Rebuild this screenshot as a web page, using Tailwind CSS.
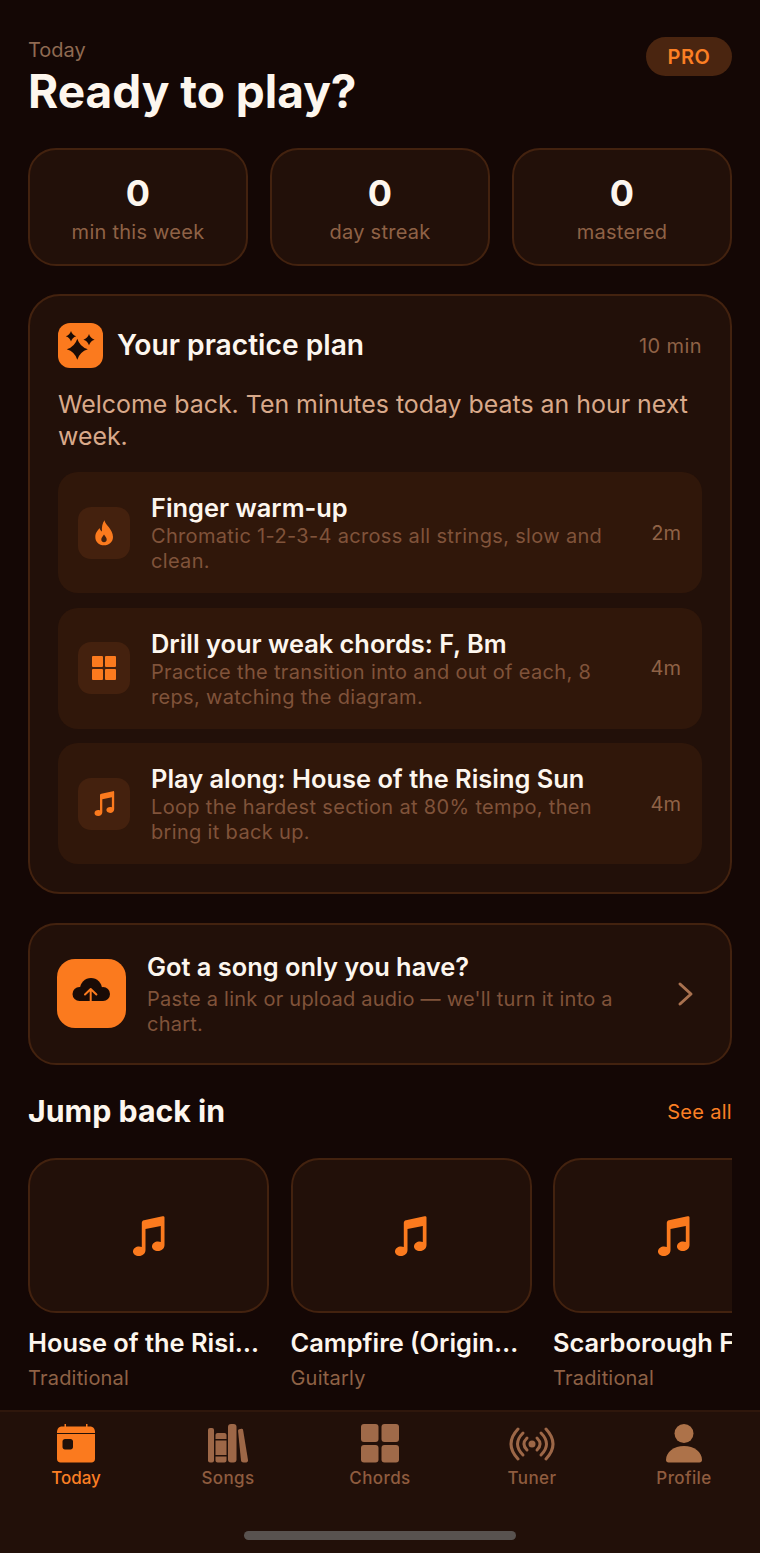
<!DOCTYPE html>
<html lang="en">
<head>
  <meta charset="UTF-8" />
  <meta name="viewport" content="width=device-width, initial-scale=1.0"/>
  <title>Today</title>
  <script src="https://cdn.jsdelivr.net/npm/@tailwindcss/browser@4"></script>
</head>
<body class="bg-[#140705] font-['Inter',sans-serif]">
<div class="w-[760px] h-[1553px] overflow-hidden flex flex-col">

  <main class="flex-1 min-h-0 px-[28px] overflow-hidden">
    <!-- header -->
    <div class="flex justify-between h-[148px] pt-[37px]">
      <div>
        <p class="text-[20px] leading-[26px] text-[#8f6a52]">Today</p>
        <h1 class="text-[46px] leading-[56px] font-bold text-[#fdf6ee]">Ready to play?</h1>
      </div>
      <span class="h-[39px] w-[86px] flex items-center justify-center rounded-full bg-[#4a2510] text-[20px] font-semibold tracking-[0.5px] text-[#fb7f24]">PRO</span>
    </div>

    <!-- stats -->
    <div class="grid grid-cols-3 gap-[22px]">
      <div class="h-[118px] rounded-[28px] border-2 border-[#43220f] bg-[#221009] flex flex-col items-center pt-[23px]">
        <p class="text-[36px] leading-[40px] font-bold text-[#fdf6ee]">0</p>
        <p class="mt-[6px] text-[20px] leading-[26px] tracking-[0.25px] text-[#8f6246]">min this week</p>
      </div>
      <div class="h-[118px] rounded-[28px] border-2 border-[#43220f] bg-[#221009] flex flex-col items-center pt-[23px]">
        <p class="text-[36px] leading-[40px] font-bold text-[#fdf6ee]">0</p>
        <p class="mt-[6px] text-[20px] leading-[26px] tracking-[0.25px] text-[#8f6246]">day streak</p>
      </div>
      <div class="h-[118px] rounded-[28px] border-2 border-[#43220f] bg-[#221009] flex flex-col items-center pt-[23px]">
        <p class="text-[36px] leading-[40px] font-bold text-[#fdf6ee]">0</p>
        <p class="mt-[6px] text-[20px] leading-[26px] tracking-[0.25px] text-[#8f6246]">mastered</p>
      </div>
    </div>

    <!-- practice plan -->
    <section class="mt-[28px] h-[600px] rounded-[32px] border-2 border-[#43220f] bg-[#221009] px-[28px] pt-[26.500px]">
      <div class="flex items-center h-[46px]">
        <div class="w-[45px] h-[45px] rounded-[12px] bg-[#fb7a1e]">
          <svg width="45" height="45" viewBox="0 0 45 45" fill="#1a0b06"><path d="M19.300 15.800Q21.800 23.800 29.800 26.300Q21.800 28.800 19.300 36.800Q16.800 28.800 8.800 26.300Q16.800 23.800 19.300 15.800z"/><path d="M13 8.100Q14.200 12.100 18.200 13.300Q14.200 14.500 13 18.500Q11.800 14.500 7.800 13.300Q11.800 12.100 13 8.100z"/><path d="M31 11.100Q32.300 15.400 36.600 16.700Q32.300 18 31 22.300Q29.700 18 25.400 16.700Q29.700 15.400 31 11.100z"/></svg>
        </div>
        <h2 class="ml-[14px] text-[28.200px] font-semibold text-[#fdf6ee]">Your practice plan</h2>
        <span class="ml-auto text-[20px] tracking-[0.4px] text-[#8f6246]">10 min</span>
      </div>
      <p class="mt-[19.500px] text-[24.900px] leading-[32px] text-[#d9a98a]">Welcome back. Ten minutes today beats an hour next week.</p>

      <div class="mt-[20px] flex flex-col gap-[14.500px]">
        <div class="h-[121px] rounded-[20px] bg-[#30170a] flex items-center pl-[20px] pr-[21px]">
          <div class="w-[52px] h-[52px] shrink-0 rounded-[13px] bg-[#44210e]">
            <svg width="52" height="52" viewBox="0 0 52 52" fill="#fb7a1e"><path fill-rule="evenodd" d="M26.500 13.300C27 18 35 22 35 30C35 35 31 38.300 26 38.300C21 38.300 17.300 35 17.300 30C17.300 25.500 20 23.500 21.500 21C22 23 23 24 24 24.500C23.500 20 24.500 16 26.500 13.300zM26 27.500C24.500 29.500 23.300 31 23.300 32.500C23.300 34.200 24.500 35.300 26 35.300C27.500 35.300 28.700 34.200 28.700 32.500C28.700 31 27.500 29.500 26 27.500z"/></svg>
          </div>
          <div class="ml-[21px] flex-1 min-w-0 pt-[2px]">
            <p class="text-[25.400px] leading-[30px] font-semibold text-[#fdf6ee]">Finger warm-up</p>
            <p class="mt-[1px] text-[20px] leading-[25px] tracking-[0.33px] text-[#80533a]">Chromatic 1-2-3-4 across all strings, slow and clean.</p>
          </div>
          <span class="ml-[32px] shrink-0 text-[20px] text-[#8f6246]">2m</span>
        </div>

        <div class="h-[121px] rounded-[20px] bg-[#30170a] flex items-center pl-[20px] pr-[21px]">
          <div class="w-[52px] h-[52px] shrink-0 rounded-[13px] bg-[#44210e] flex items-center justify-center">
            <svg width="26" height="26" viewBox="0 0 26 26" fill="#fb7a1e"><rect x="1" y="1" width="11" height="11" rx="1"/><rect x="14" y="1" width="11" height="11" rx="1"/><rect x="1" y="14" width="11" height="11" rx="1"/><rect x="14" y="14" width="11" height="11" rx="1"/></svg>
          </div>
          <div class="ml-[21px] flex-1 min-w-0 pt-[2px]">
            <p class="text-[25.400px] leading-[30px] font-semibold text-[#fdf6ee]">Drill your weak chords: F, Bm</p>
            <p class="mt-[1px] text-[20px] leading-[25px] tracking-[0.33px] text-[#80533a]">Practice the transition into and out of each, 8 reps, watching the diagram.</p>
          </div>
          <span class="ml-[32px] shrink-0 text-[20px] text-[#8f6246]">4m</span>
        </div>

        <div class="h-[121px] rounded-[20px] bg-[#30170a] flex items-center pl-[20px] pr-[21px]">
          <div class="w-[52px] h-[52px] shrink-0 rounded-[13px] bg-[#44210e] flex items-center justify-center">
            <svg width="21" height="25" viewBox="0 0 32 40" fill="#fb7a1e"><path d="M31.500 1.500V29C31.500 32.500 28.500 35 25 35C21.500 35 19 33 19 30.500C19 27.500 22 25.500 25 25.500C26 25.500 27 25.700 27.800 26V10L12.500 13V34C12.500 37.500 9.500 40 6 40C2.500 40 0 38 0 35.500C0 32.500 3 30.500 6 30.500C7 30.500 8 30.700 8.800 31V7C8.800 5.500 9.500 4.500 11 4.200L29.500 .2C30.700 0 31.500 .5 31.500 1.500z"/></svg>
          </div>
          <div class="ml-[21px] flex-1 min-w-0 pt-[2px]">
            <p class="text-[25.400px] leading-[30px] font-semibold text-[#fdf6ee]">Play along: House of the Rising Sun</p>
            <p class="mt-[1px] text-[20px] leading-[25px] tracking-[0.33px] text-[#80533a]">Loop the hardest section at 80% tempo, then bring it back up.</p>
          </div>
          <span class="ml-[32px] shrink-0 text-[20px] text-[#8f6246]">4m</span>
        </div>
      </div>
    </section>

    <!-- upload -->
    <section class="mt-[29px] h-[142px] rounded-[28px] border-2 border-[#43220f] bg-[#221009] flex items-center pl-[27px] pr-[35px]">
      <div class="w-[69px] h-[69px] mb-[2px] shrink-0 rounded-[18px] bg-[#fb7a1e]">
        <svg width="69" height="69" viewBox="0 0 69 69"><g fill="#1a0b06"><circle cx="34" cy="30" r="11"/><circle cx="22.500" cy="35" r="7"/><circle cx="46" cy="35" r="7"/><rect x="22" y="32" width="24" height="10"/></g><path fill="none" stroke="#fb7a1e" stroke-width="2" stroke-linecap="round" stroke-linejoin="round" d="M33.700 49V30M28 35.500L33.700 30L39.400 35.500"/></svg>
      </div>
      <div class="ml-[21px] flex-1 min-w-0 mb-[1px]">
        <p class="text-[25.400px] leading-[32px] font-semibold text-[#fdf6ee]">Got a song only you have?</p>
        <p class="mt-[4px] text-[20px] leading-[25px] tracking-[0.25px] text-[#80533a]">Paste a link or upload audio — we'll turn it into a chart.</p>
      </div>
      <svg class="ml-[50px] shrink-0" width="18" height="26" viewBox="0 0 18 26" fill="none" stroke="#a9714f" stroke-width="3" stroke-linecap="round" stroke-linejoin="round"><path d="M3 3l11 10L3 23"/></svg>
    </section>

    <!-- jump back in -->
    <div class="mt-[27px] flex items-center justify-between h-[40px]">
      <h2 class="text-[30.300px] font-bold text-[#fdf6ee]">Jump back in</h2>
      <a class="text-[20px] tracking-[0.3px] text-[#fb7f24]">See all</a>
    </div>
    <div class="mt-[26px] flex gap-[21.500px] overflow-hidden">
      <div class="w-[241px] shrink-0">
        <div class="h-[155px] rounded-[28px] border-2 border-[#43220f] bg-[#221009] flex items-center justify-center">
          <svg width="32" height="40" viewBox="0 0 32 40" fill="#fb7a1e"><path d="M31.500 1.500V29C31.500 32.500 28.500 35 25 35C21.500 35 19 33 19 30.500C19 27.500 22 25.500 25 25.500C26 25.500 27 25.700 27.800 26V10L12.500 13V34C12.500 37.500 9.500 40 6 40C2.500 40 0 38 0 35.500C0 32.500 3 30.500 6 30.500C7 30.500 8 30.700 8.800 31V7C8.800 5.500 9.500 4.500 11 4.200L29.500 .2C30.700 0 31.500 .5 31.500 1.500z"/></svg>
        </div>
        <p class="mt-[13px] text-[25.400px] leading-[34px] font-semibold text-[#fdf6ee] truncate">House of the Rising Sun</p>
        <p class="mt-[5px] text-[20px] leading-[26px] tracking-[0.2px] text-[#8f6246]">Traditional</p>
      </div>
      <div class="w-[241px] shrink-0">
        <div class="h-[155px] rounded-[28px] border-2 border-[#43220f] bg-[#221009] flex items-center justify-center">
          <svg width="32" height="40" viewBox="0 0 32 40" fill="#fb7a1e"><path d="M31.500 1.500V29C31.500 32.500 28.500 35 25 35C21.500 35 19 33 19 30.500C19 27.500 22 25.500 25 25.500C26 25.500 27 25.700 27.800 26V10L12.500 13V34C12.500 37.500 9.500 40 6 40C2.500 40 0 38 0 35.500C0 32.500 3 30.500 6 30.500C7 30.500 8 30.700 8.800 31V7C8.800 5.500 9.500 4.500 11 4.200L29.500 .2C30.700 0 31.500 .5 31.500 1.500z"/></svg>
        </div>
        <p class="mt-[13px] text-[25.400px] leading-[34px] font-semibold text-[#fdf6ee] truncate">Campfire (Original Mix)</p>
        <p class="mt-[5px] text-[20px] leading-[26px] tracking-[0.2px] text-[#8f6246]">Guitarly</p>
      </div>
      <div class="w-[241px] shrink-0">
        <div class="h-[155px] rounded-[28px] border-2 border-[#43220f] bg-[#221009] flex items-center justify-center">
          <svg width="32" height="40" viewBox="0 0 32 40" fill="#fb7a1e"><path d="M31.500 1.500V29C31.500 32.500 28.500 35 25 35C21.500 35 19 33 19 30.500C19 27.500 22 25.500 25 25.500C26 25.500 27 25.700 27.800 26V10L12.500 13V34C12.500 37.500 9.500 40 6 40C2.500 40 0 38 0 35.500C0 32.500 3 30.500 6 30.500C7 30.500 8 30.700 8.800 31V7C8.800 5.500 9.500 4.500 11 4.200L29.500 .2C30.700 0 31.500 .5 31.500 1.500z"/></svg>
        </div>
        <p class="mt-[13px] text-[25.400px] leading-[34px] font-semibold text-[#fdf6ee] whitespace-nowrap">Scarborough Fair</p>
        <p class="mt-[5px] text-[20px] leading-[26px] tracking-[0.2px] text-[#8f6246]">Traditional</p>
      </div>
    </div>
  </main>

  <!-- tab bar -->
  <nav class="h-[143px] shrink-0 bg-[#221009] border-t-2 border-[#2f170c] flex flex-col">
    <div class="grid grid-cols-5 pt-[12px]">
      <div class="flex flex-col items-center text-[#fb7f24]">
        <svg width="38" height="40" viewBox="0 0 38 40" fill="#fb7a1e"><rect x="7.500" y="0" width="1.500" height="4"/><rect x="29" y="0" width="1.500" height="4"/><path d="M0 8.500C0 4.500 2 2.500 5 2.500H33C36 2.500 38 4.500 38 8.500V9H0z"/><path fill-rule="evenodd" d="M0 10H38V35C38 37 36.500 38.500 34.500 38.500H3.500C1.500 38.500 0 37 0 35zM8 15C6.600 15 5.500 16.100 5.500 17.500V23C5.500 24.400 6.600 25.500 8 25.500H13.500C14.900 25.500 16 24.400 16 23V17.500C16 16.100 14.900 15 13.500 15z"/></svg>
        <span class="mt-[2px] text-[17px] leading-[24px] font-medium">Today</span>
      </div>
      <div class="flex flex-col items-center text-[#8f5c3f]">
        <svg width="40" height="40" viewBox="0 0 40 40" fill="#9d6747"><rect x="0" y="4" width="6" height="34.500" rx="2"/><path d="M7.500 11C7.500 9.800 8.500 9 9.500 9H16.500C17.500 9 18.500 9.800 18.500 11V15H7.500z"/><rect x="7.500" y="16.500" width="11" height="14.500"/><path d="M7.500 32.500H18.500V36.500C18.500 37.700 17.500 38.500 16.500 38.500H9.500C8.500 38.500 7.500 37.700 7.500 36.500z"/><rect x="20" y="0" width="8.500" height="38.500" rx="3"/><path d="M30 6.500C30 5 34.500 4 35 5.500L40 36C40.200 37.500 39 38.500 37.500 38.500H35.500C34 38.500 33.200 37.500 33 36.500z"/></svg>
        <span class="mt-[2px] text-[17px] leading-[24px] font-medium tracking-[0.4px]">Songs</span>
      </div>
      <div class="flex flex-col items-center text-[#8f5c3f]">
        <svg width="40" height="40" viewBox="0 0 40 40" fill="#a06a49"><rect x="1" y="0" width="17.500" height="18" rx="3"/><rect x="21.500" y="0" width="17.500" height="18" rx="3"/><rect x="1" y="21" width="17.500" height="17.500" rx="3"/><rect x="21.500" y="21" width="17.500" height="17.500" rx="3"/></svg>
        <span class="mt-[2px] text-[17px] leading-[24px] font-medium tracking-[0.4px]">Chords</span>
      </div>
      <div class="flex flex-col items-center text-[#8f5c3f]">
        <svg width="46" height="40" viewBox="0 0 46 40" fill="none" stroke="#9d6747" stroke-width="3" stroke-linecap="round"><circle cx="23" cy="20" r="3.500" fill="#9d6747" stroke="none"/><path d="M18 14Q12 20 18 26M28 14Q34 20 28 26"/><path d="M14 9Q3 20 14 31M32 9Q43 20 32 31"/><path d="M9 5Q-5 20 9 35M37 5Q51 20 37 35"/></svg>
        <span class="mt-[2px] text-[17px] leading-[24px] font-medium tracking-[0.4px]">Tuner</span>
      </div>
      <div class="flex flex-col items-center text-[#8f5c3f]">
        <svg width="38" height="40" viewBox="0 0 38 40" fill="#ad7249"><circle cx="19" cy="9.500" r="9.500"/><path d="M1 36C1 28 9 22 19 22s18 6 18 14c0 1.500-1 2.500-2.500 2.500h-31C2 38.500 1 37.500 1 36z"/></svg>
        <span class="mt-[2px] text-[17px] leading-[24px] font-medium tracking-[0.4px]">Profile</span>
      </div>
    </div>
    <div class="mt-auto mb-[13px] mx-auto w-[272px] h-[9px] rounded-full bg-[#58524f]"></div>
  </nav>
</div>
</body>
</html>
